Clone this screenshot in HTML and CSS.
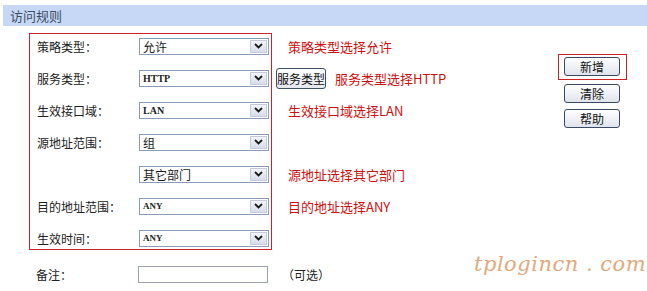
FILE: index.html
```html
<!DOCTYPE html>
<html lang="zh">
<head>
<meta charset="utf-8">
<link rel="stylesheet" href="styles.css">
</head>
<body>
<div class="page">
  <div class="titlebar">访问规则</div>
  <div class="main">
    <div class="form">
      <div class="hl-box">
        <div class="row">
          <span class="label">策略类型：</span>
          <div class="sel"><span class="val">允许</span><span class="drop"><svg width="9" height="6" viewBox="0 0 9 6"><path d="M1 1 L4.5 4.5 L8 1" fill="none" stroke="#1a1a1a" stroke-width="1.8"/></svg></span></div>
          <span class="note">策略类型选择允许</span>
        </div>
        <div class="row">
          <span class="label">服务类型：</span>
          <div class="sel"><span class="val latin">HTTP</span><span class="drop"><svg width="9" height="6" viewBox="0 0 9 6"><path d="M1 1 L4.5 4.5 L8 1" fill="none" stroke="#1a1a1a" stroke-width="1.8"/></svg></span></div>
          <button class="btn-svc">服务类型</button>
          <span class="note note-tight">服务类型选择HTTP</span>
        </div>
        <div class="row">
          <span class="label">生效接口域：</span>
          <div class="sel"><span class="val latin">LAN</span><span class="drop"><svg width="9" height="6" viewBox="0 0 9 6"><path d="M1 1 L4.5 4.5 L8 1" fill="none" stroke="#1a1a1a" stroke-width="1.8"/></svg></span></div>
          <span class="note">生效接口域选择LAN</span>
        </div>
        <div class="row">
          <span class="label">源地址范围：</span>
          <div class="sel"><span class="val">组</span><span class="drop"><svg width="9" height="6" viewBox="0 0 9 6"><path d="M1 1 L4.5 4.5 L8 1" fill="none" stroke="#1a1a1a" stroke-width="1.8"/></svg></span></div>
        </div>
        <div class="row">
          <span class="label"></span>
          <div class="sel"><span class="val">其它部门</span><span class="drop"><svg width="9" height="6" viewBox="0 0 9 6"><path d="M1 1 L4.5 4.5 L8 1" fill="none" stroke="#1a1a1a" stroke-width="1.8"/></svg></span></div>
          <span class="note">源地址选择其它部门</span>
        </div>
        <div class="row">
          <span class="label">目的地址范围：</span>
          <div class="sel"><span class="val latin small">ANY</span><span class="drop"><svg width="9" height="6" viewBox="0 0 9 6"><path d="M1 1 L4.5 4.5 L8 1" fill="none" stroke="#1a1a1a" stroke-width="1.8"/></svg></span></div>
          <span class="note">目的地址选择ANY</span>
        </div>
        <div class="row">
          <span class="label">生效时间：</span>
          <div class="sel"><span class="val latin small">ANY</span><span class="drop"><svg width="9" height="6" viewBox="0 0 9 6"><path d="M1 1 L4.5 4.5 L8 1" fill="none" stroke="#1a1a1a" stroke-width="1.8"/></svg></span></div>
        </div>
      </div>
      <div class="row row-remark">
        <span class="label">备注：</span>
        <div class="textbox"></div>
        <span class="optional">（可选）</span>
      </div>
    </div>
    <div class="side">
      <div class="hl-btn"><button class="btn">新增</button></div>
      <button class="btn">清除</button>
      <button class="btn">帮助</button>
    </div>
  </div>
  <div class="watermark">tplogincn . com</div>
</div>
</body>
</html>
```

FILE: styles.css
```css
* { box-sizing: border-box; }
html, body { margin: 0; padding: 0; background: #fff; }
body {
  font-family: "Noto Sans CJK SC", "Liberation Sans", sans-serif;
  font-size: 12px;
  color: #1a1a1a;
  width: 647px;
  height: 291px;
  overflow: hidden;
}
.page { position: relative; padding-top: 5px; height: 291px; }
.titlebar {
  margin-left: 3px;
  height: 21px;
  line-height: 21px;
  background: #c6d8f5;
  color: #3e4c66;
  font-size: 13px;
  padding-left: 7px;
}
.main { display: flex; margin-top: 7px; }
.form { width: 558px; flex: none; padding-left: 29px; }
.hl-box {
  width: 243px;
  border: 1px solid #d0202a;
  padding: 3px 0 2px 0;
  display: flex;
  flex-direction: column;
  gap: 14px;
}
.row { display: flex; align-items: center; height: 18px; white-space: nowrap; }
.label { width: 109px; padding-left: 7px; flex: none; color: #222; }
.sel {
  flex: none;
  width: 130px;
  height: 17px;
  border: 1px solid #8a9bb5;
  display: flex;
  align-items: center;
  justify-content: space-between;
  background: #fff;
}
.val { padding-left: 3px; font-size: 12px; line-height: 15px; }
.val.latin { font-family: "Liberation Serif", serif; font-weight: bold; font-size: 10px; color: #222; }
.val.small { font-size: 9px; }
.drop {
  width: 17px;
  height: 13px;
  margin-right: 1px;
  background: linear-gradient(#f2f4f8, #d8dee8);
  border: 1px solid #c3cbd8;
  display: flex;
  align-items: center;
  justify-content: center;
}
.note {
  margin-left: 19px;
  color: #cc1111;
  font-size: 13px;
  font-family: "Noto Sans CJK SC", sans-serif;
}
.note.note-tight { margin-left: 9px; }
.btn-svc {
  margin-left: 7px;
  width: 57px;
  height: 21px;
  padding: 0;
  font-family: "Noto Sans CJK SC", sans-serif;
  font-size: 12px;
  color: #111;
  border: 1px solid #3f4f66;
  border-radius: 3px;
  background: linear-gradient(#ffffff, #e4e8ef);
}
.row-remark { margin-top: 15px; }
.textbox {
  width: 130px;
  height: 17px;
  border: 1px solid #9aa3ad;
  background: #fff;
}
.optional { margin-left: 14px; color: #222; }
.side {
  display: flex;
  flex-direction: column;
  align-items: flex-start;
  padding-top: 21px;
}
.hl-btn {
  border: 1px solid #d0202a;
  padding: 2px 6px 3px 5px;
  margin-bottom: 4px;
}
.btn {
  width: 56px;
  height: 19px;
  padding: 0;
  margin-left: 0;
  font-family: "Noto Sans CJK SC", sans-serif;
  font-size: 12px;
  color: #111;
  border: 1px solid #3a4a62;
  border-radius: 3px;
  background: linear-gradient(#ffffff, #dfe4ec);
}
.side > .btn { margin-left: 6px; margin-bottom: 6px; }
.watermark {
  position: absolute;
  left: 474px;
  top: 252px;
  white-space: nowrap;
  font-family: "DejaVu Serif", serif;
  font-style: italic;
  font-size: 21px;
  color: #e0a070;
  letter-spacing: 0.5px;
  opacity: 0.9;
}
```
